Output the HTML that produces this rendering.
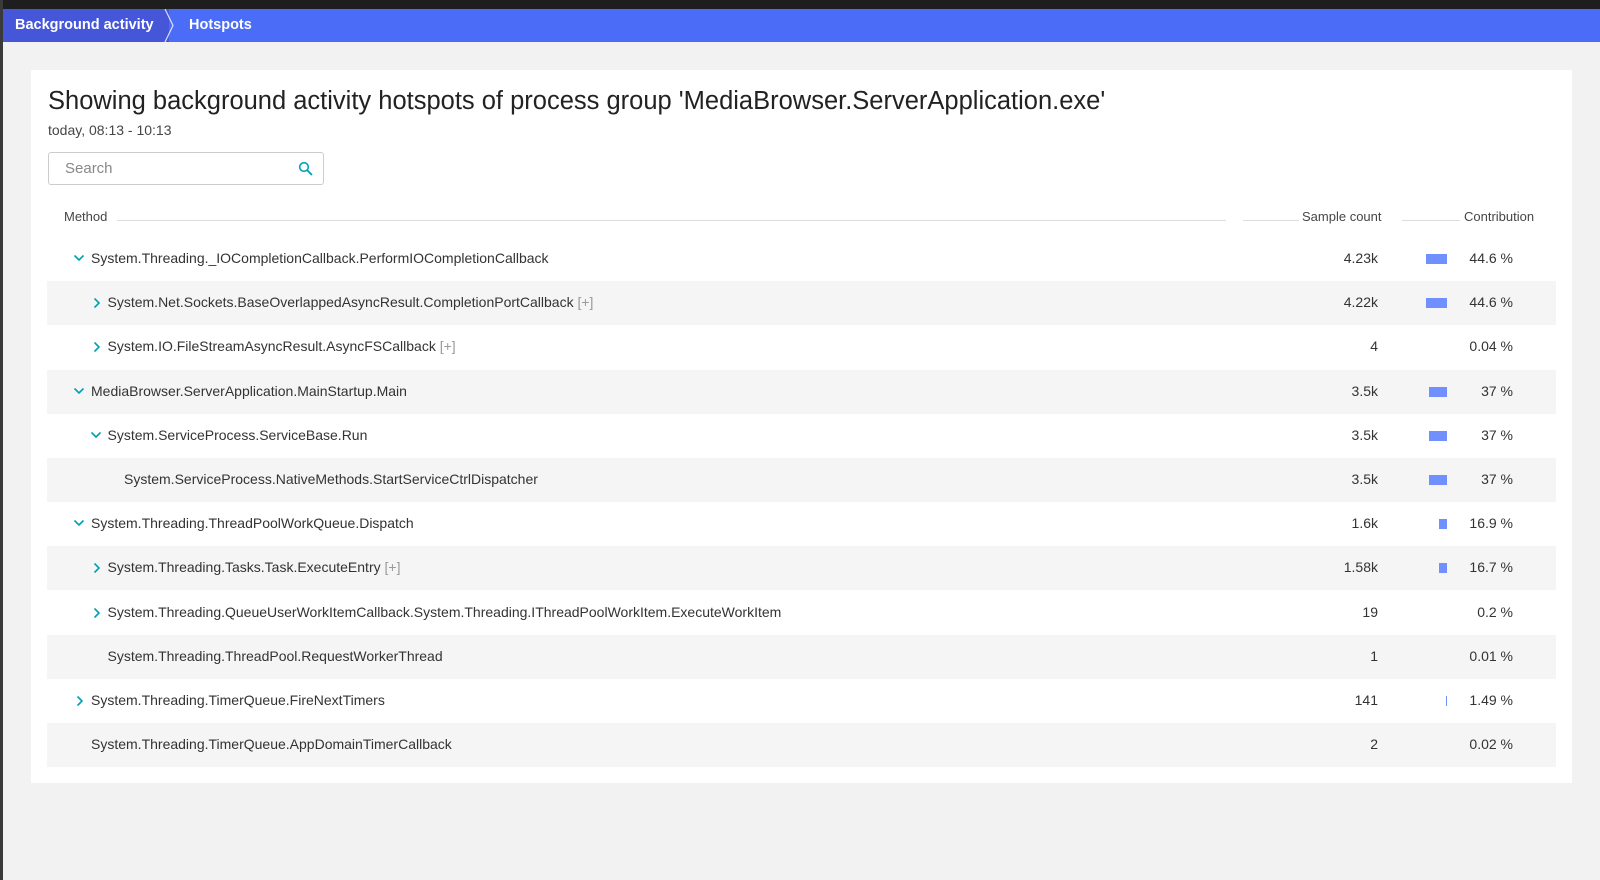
<!DOCTYPE html>
<html><head><meta charset="utf-8"><style>
*{margin:0;padding:0;box-sizing:border-box}
body{width:1600px;height:880px;background:#f2f2f2;font-family:"Liberation Sans",sans-serif;color:#454646;position:relative;overflow:hidden}
.top{position:absolute;left:0;top:0;width:1600px;height:9px;background:#1e1e1e}
.left{position:absolute;left:0;top:0;width:3px;height:880px;background:#3a3a3a}
.nav{position:absolute;left:3px;top:9px;width:1597px;height:33px;background:#4a6cf7;color:#fff;font-size:14.5px;font-weight:bold}
.bc1{position:absolute;left:0;top:0;height:33px;width:166px;background:#4556d8;padding:8px 0 0 12px}
.chev{position:absolute;left:160px;top:0}
.bc2{position:absolute;left:186px;top:8px}
.card{position:absolute;left:31px;top:70px;width:1541px;height:713px;background:#fff}
h1{position:absolute;left:17px;top:17px;font-size:25.5px;font-weight:normal;color:#222}
.sub{position:absolute;left:17px;top:52px;font-size:14px;color:#454646}
.search{position:absolute;left:17px;top:82px;width:276px;height:33px;border:1px solid #ccc;border-radius:3px;font-size:15px;color:#888;padding:7px 0 0 16px}
.search svg{position:absolute;right:9px;top:8px}
.hdr{position:absolute;top:139px;font-size:13px;color:#454646}
.line{position:absolute;top:150px;height:1px;background:#ddd}
.row{position:absolute;left:16px;width:1509px;height:44px;font-size:14px;color:#333}
.row.s{background:#f5f5f5}
.row .t{position:absolute;top:13px;white-space:nowrap}
.row .c{position:absolute;right:178px;top:13px;text-align:right}
.row .p{position:absolute;right:43px;top:13px;text-align:right}
.row .b{position:absolute;right:109px;top:17px;height:10px;background:#7090ff}
.row svg{position:absolute;top:16px}
.pl{color:#999}
</style></head><body>
<div class="top"></div><div class="left"></div>
<div class="nav"><div class="bc1">Background activity</div>
<svg class="chev" width="14" height="33"><polyline points="2,0 10,16.5 2,33" fill="none" stroke="#fff" stroke-width="1.2" opacity=".8"/></svg>
<div class="bc2">Hotspots</div></div>
<div class="card">
<h1>Showing background activity hotspots of process group 'MediaBrowser.ServerApplication.exe'</h1>
<div class="sub">today, 08:13 - 10:13</div>
<div class="search">Search<svg width="16" height="16"><circle cx="6" cy="6" r="4.3" fill="none" stroke="#00a1b2" stroke-width="1.6"/><line x1="9.2" y1="9.2" x2="14" y2="14" stroke="#00a1b2" stroke-width="1.8"/></svg></div>
<div class="hdr" style="left:33px">Method</div><div class="line" style="left:86px;width:1109px"></div>
<div class="line" style="left:1212px;width:56px"></div><div class="hdr" style="left:1271px">Sample count</div>
<div class="line" style="left:1371px;width:58px"></div><div class="hdr" style="left:1433px">Contribution</div>
<div id="rows"></div>
</div>
<script>
const R=[[0,'d','System.Threading._IOCompletionCallback.PerformIOCompletionCallback','','4.23k',21,'44.6 %'],
[1,'r','System.Net.Sockets.BaseOverlappedAsyncResult.CompletionPortCallback',1,'4.22k',21,'44.6 %'],
[1,'r','System.IO.FileStreamAsyncResult.AsyncFSCallback',1,'4',0,'0.04 %'],
[0,'d','MediaBrowser.ServerApplication.MainStartup.Main','','3.5k',18,'37 %'],
[1,'d','System.ServiceProcess.ServiceBase.Run','','3.5k',18,'37 %'],
[2,'','System.ServiceProcess.NativeMethods.StartServiceCtrlDispatcher','','3.5k',18,'37 %'],
[0,'d','System.Threading.ThreadPoolWorkQueue.Dispatch','','1.6k',8,'16.9 %'],
[1,'r','System.Threading.Tasks.Task.ExecuteEntry',1,'1.58k',8,'16.7 %'],
[1,'r','System.Threading.QueueUserWorkItemCallback.System.Threading.IThreadPoolWorkItem.ExecuteWorkItem','','19',0,'0.2 %'],
[1,'','System.Threading.ThreadPool.RequestWorkerThread','','1',0,'0.01 %'],
[0,'r','System.Threading.TimerQueue.FireNextTimers','','141',1,'1.49 %'],
[0,'','System.Threading.TimerQueue.AppDomainTimerCallback','','2',0,'0.02 %']];
let h='';R.forEach((r,i)=>{const top=167+i*44.2;const tx=44+r[0]*16.5;let ic='';
if(r[1]=='d')ic=`<svg style="left:${tx-18}px" width="12" height="10"><polyline points="1.5,2.5 6,7 10.5,2.5" fill="none" stroke="#00a1b2" stroke-width="1.6"/></svg>`;
if(r[1]=='r')ic=`<svg style="left:${tx-16}px" width="10" height="12"><polyline points="2.5,1.5 7,6 2.5,10.5" fill="none" stroke="#00a1b2" stroke-width="1.6"/></svg>`;
h+=`<div class="row${i%2?' s':''}" style="top:${top}px">${ic}<div class="t" style="left:${tx}px">${r[2]}${r[3]?' <span class="pl">[+]</span>':''}</div><div class="c">${r[4]}</div>${r[5]?`<div class="b" style="width:${r[5]}px"></div>`:''}<div class="p">${r[6]}</div></div>`});
document.getElementById('rows').innerHTML=h;
</script>
</body></html>
